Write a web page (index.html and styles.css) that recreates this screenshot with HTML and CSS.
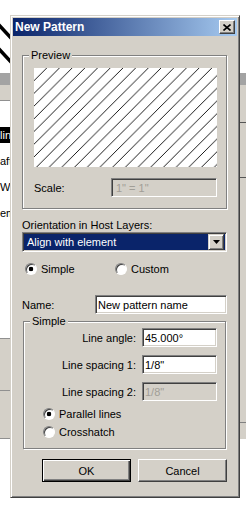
FILE: index.html
```html
<!DOCTYPE html>
<html lang="en">

<head>
    <meta charset="UTF-8">
    <meta name="viewport" content="width=device-width, initial-scale=1.0">
    <title>New Pattern</title>
    <link rel="stylesheet" href="styles.css">
</head>

<body>

    <div class="desk">
        <div class="desk-top">
            <svg class="hatch-bg" width="12" height="73" viewBox="0 0 12 73">
                <path d="M-2 24 L12 39 M-2 48 L12 63" stroke="#000" stroke-width="3.5" />
            </svg>
        </div>
        <div class="desk-bar"></div>
        <div class="desk-main">
            <div class="side">
                <div class="side-head"></div>
                <ul class="side-list">
                    <li class="selected">lin</li>
                    <li>aft</li>
                    <li>Wa</li>
                    <li>em</li>
                </ul>
                <div class="side-foot">
                    <div class="side-foot-row"></div>
                </div>
            </div>
            <div class="pane">
                <div class="pane-row first"></div>
                <div class="pane-row second"></div>
                <div class="pane-row third"></div>
            </div>
        </div>
    </div>

    <div class="dialog">
        <div class="titlebar">
            <span class="title">New Pattern</span>
            <button class="close" type="button">
                <svg width="8" height="7" viewBox="0 0 8 7">
                    <path d="M0.5 0.5 L7.5 6.5 M7.5 0.5 L0.5 6.5" stroke="#000" stroke-width="1.6" />
                </svg>
            </button>
        </div>

        <div class="dialog-body">
            <fieldset class="group preview-group">
                <legend>Preview</legend>
                <div class="group-body">
                    <svg class="preview" width="183" height="99" viewBox="0 0 183 99">
                        <defs>
                            <pattern id="hatch" width="12.7" height="12.7" patternUnits="userSpaceOnUse">
                                <path d="M-1 13.7 L13.7 -1 M-1 1 L1 -1 M11.7 13.7 L13.7 11.7" stroke="#000" stroke-width="0.9" />
                            </pattern>
                        </defs>
                        <rect width="183" height="99" fill="#fff" />
                        <rect width="183" height="99" fill="url(#hatch)" />
                    </svg>
                    <div class="scale-row">
                        <span>Scale:</span>
                        <input class="field scale-field" type="text" value="1&quot; = 1&quot;" disabled>
                    </div>
                </div>
            </fieldset>

            <div class="orient-label">Orientation in Host Layers:</div>
            <div class="combo">
                <span class="combo-value">Align with element</span>
                <span class="combo-btn">
                    <svg width="7" height="4" viewBox="0 0 7 4">
                        <path d="M0 0 H7 L3.5 4 Z" fill="#000" />
                    </svg>
                </span>
            </div>

            <div class="radio-row">
                <label class="option kind-simple"><input type="radio" name="kind" checked>Simple</label>
                <label class="option"><input type="radio" name="kind">Custom</label>
            </div>

            <div class="name-row">
                <span>Name:</span>
                <input class="field name-field" type="text" value="New pattern name">
            </div>

            <fieldset class="group simple-group">
                <legend>Simple</legend>
                <div class="group-body">
                    <div class="param-row">
                        <span>Line angle:</span>
                        <input class="field param-field" type="text" value="45.000°">
                    </div>
                    <div class="param-row">
                        <span>Line spacing 1:</span>
                        <input class="field param-field" type="text" value="1/8&quot;">
                    </div>
                    <div class="param-row">
                        <span>Line spacing 2:</span>
                        <input class="field param-field" type="text" value="1/8&quot;" disabled>
                    </div>
                    <label class="option stacked"><input type="radio" name="lines" checked>Parallel lines</label>
                    <label class="option stacked"><input type="radio" name="lines">Crosshatch</label>
                </div>
            </fieldset>

            <div class="buttons">
                <button class="btn btn-default" type="button">OK</button>
                <button class="btn" type="button">Cancel</button>
            </div>
        </div>
    </div>

</body>

</html>
```

FILE: styles.css
```css
body {
    font-family: 'Liberation Sans', Arial, sans-serif;
    font-size: 11px;
    margin: 0;
    padding: 0;
    width: 246px;
    height: 509px;
    overflow: hidden;
    position: relative;
    background-color: #fff;
    color: #000;
}

/* window behind the dialog */

.desk-top {
    height: 73px;
}

.hatch-bg {
    display: block;
}

.desk-bar {
    height: 12px;
    background-color: #a3a3a3;
}

.desk-main {
    display: flex;
    justify-content: space-between;
}

.side {
    width: 40px;
}

.side-head {
    height: 15px;
    background-color: #d4d0c8;
    border-bottom: 1px solid #909090;
}

.side-list {
    list-style: none;
    margin: 0;
    padding: 26px 0 0;
    height: 211px;
    background-color: #fff;
}

.side-list li {
    height: 16px;
    line-height: 16px;
    margin-bottom: 10px;
    white-space: nowrap;
}

.side-list li.selected {
    background-color: #000;
    color: #fff;
}

.side-foot {
    height: 99px;
    background-color: #d4d0c8;
    border-top: 1px solid #909090;
    border-bottom: 1px solid #909090;
}

.side-foot-row {
    height: 51px;
    border-bottom: 1px solid #909090;
}

.pane {
    width: 6px;
    background-color: #d4d0c8;
}

.pane-row {
    border-bottom: 1px solid #555;
}

.pane-row.first {
    height: 37px;
}

.pane-row.second {
    height: 54px;
}

.pane-row.third {
    height: 244px;
    border-bottom-color: #808080;
}

/* dialog */

.dialog {
    position: absolute;
    left: 10px;
    top: 15px;
    width: 230px;
    height: 483px;
    box-sizing: border-box;
    padding: 2px;
    background-color: #d4d0c8;
    border: 1px solid;
    border-color: #d4d0c8 #404040 #404040 #d4d0c8;
    box-shadow: inset 1px 1px #fff, inset -1px -1px #808080;
}

.titlebar {
    height: 18px;
    display: flex;
    align-items: center;
    justify-content: space-between;
    padding: 0 2px;
    background: linear-gradient(to right, #0a246a, #a6caf0);
}

.title {
    color: #fff;
    font-size: 12px;
    font-weight: bold;
}

.close {
    width: 16px;
    height: 14px;
    padding: 0;
    display: flex;
    align-items: center;
    justify-content: center;
    background-color: #d4d0c8;
    border: 1px solid;
    border-color: #fff #404040 #404040 #fff;
    box-shadow: inset -1px -1px #808080;
}

.dialog-body {
    padding: 0 10px 0 9px;
}

.group {
    margin: 0;
    padding: 0;
    min-width: 0;
    border: 1px solid #808080;
    box-shadow: inset 1px 1px #fff, 1px 1px #fff;
}

.group legend {
    padding: 0 2px;
    margin-left: 6px;
    line-height: 13px;
    background-color: #d4d0c8;
}

.preview-group {
    margin-top: 13px;
}

.preview-group .group-body {
    padding: 6px 9px 11px 11px;
}

.preview {
    display: block;
}

.scale-row {
    margin-top: 11px;
    display: flex;
    align-items: center;
    justify-content: space-between;
}

.field {
    box-sizing: border-box;
    height: 19px;
    margin: 0;
    padding: 0 2px;
    font: inherit;
    color: #000;
    background-color: #fff;
    border: 1px solid;
    border-color: #808080 #fff #fff #808080;
    box-shadow: inset 1px 1px #404040, inset -1px -1px #d4d0c8;
    outline: none;
}

.field:disabled {
    background-color: #d4d0c8;
    color: #a19e97;
}

.scale-field {
    width: 106px;
    padding-left: 4px;
}

.orient-label {
    margin-top: 10px;
    line-height: 13px;
}

.combo {
    height: 20px;
    box-sizing: border-box;
    display: flex;
    align-items: center;
    justify-content: space-between;
    padding: 2px;
    background-color: #0a246a;
    border: 1px solid;
    border-color: #808080 #fff #fff #808080;
    box-shadow: inset 1px 1px #404040, inset -1px -1px #d4d0c8;
}

.combo-value {
    color: #fff;
    padding-left: 2px;
}

.combo-btn {
    width: 16px;
    height: 16px;
    box-sizing: border-box;
    display: flex;
    align-items: center;
    justify-content: center;
    background-color: #d4d0c8;
    border: 1px solid;
    border-color: #d4d0c8 #404040 #404040 #d4d0c8;
    box-shadow: inset 1px 1px #fff, inset -1px -1px #808080;
}

.radio-row {
    margin-top: 10px;
    display: flex;
    padding-left: 3px;
}

.option {
    height: 14px;
    display: flex;
    align-items: center;
    gap: 4px;
}

.kind-simple {
    width: 90px;
}

.option input {
    appearance: none;
    margin: 0;
    width: 12px;
    height: 12px;
    border-radius: 50%;
    background-color: #fff;
    border: 1px solid;
    border-color: #808080 #fff #fff #808080;
    box-shadow: inset 1px 1px #404040;
}

.option input:checked {
    background: radial-gradient(circle, #000 0 2px, #fff 2.6px);
}

.name-row {
    margin-top: 19px;
    display: flex;
    align-items: center;
    justify-content: space-between;
}

.name-field {
    width: 132px;
}

.simple-group {
    margin: 1px 1px 0;
}

.simple-group .group-body {
    padding: 0 8px 9px 19px;
}

.param-row {
    display: flex;
    align-items: center;
    justify-content: flex-end;
    gap: 6px;
    margin-bottom: 8px;
}

.param-field {
    width: 75px;
}

.stacked {
    margin-top: -2px;
    margin-bottom: 6px;
}

.stacked:last-child {
    margin-bottom: 0;
}

.buttons {
    margin-top: 10px;
    display: flex;
    justify-content: flex-end;
    gap: 7px;
}

.btn {
    width: 89px;
    height: 23px;
    box-sizing: border-box;
    padding: 0;
    font: inherit;
    color: #000;
    background-color: #d4d0c8;
    border: 1px solid;
    border-color: #fff #404040 #404040 #fff;
    box-shadow: inset -1px -1px #808080;
}

.btn-default {
    border: 1px solid #000;
    box-shadow: inset 1px 1px #fff, inset -1px -1px #404040, inset -2px -2px #808080;
}
```
